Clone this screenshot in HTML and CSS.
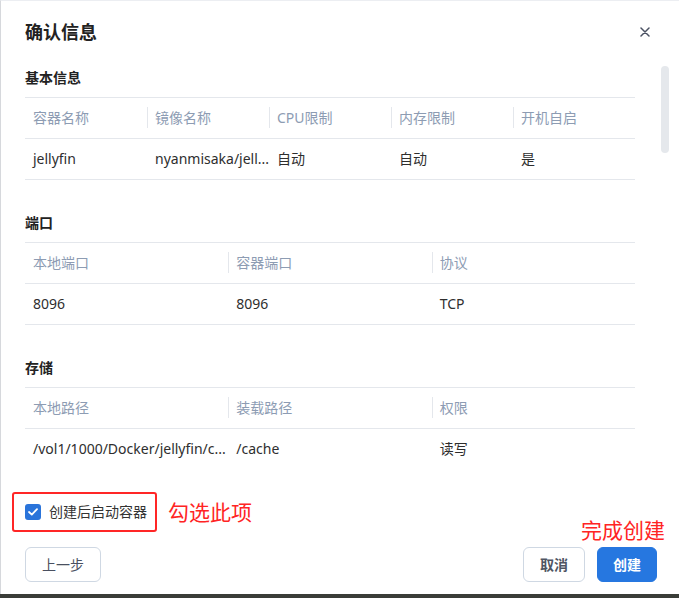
FILE: index.html
```html
<!DOCTYPE html>
<html lang="zh-CN">
<head>
  <meta charset="UTF-8" />
  <title>确认信息</title>
  <link rel="stylesheet" href="styles.css">
</head>
<body>
  <div class="dialog">
    <div class="dialog-head">
      <h1>确认信息</h1>
      <span class="close">
        <svg width="10" height="10" viewBox="0 0 10 10">
          <path d="M1 1 L9 9 M9 1 L1 9" stroke="#4b5263" stroke-width="1.5" stroke-linecap="round" />
        </svg>
      </span>
    </div>

    <div class="dialog-body">
      <div class="scroll-thumb"></div>

      <div class="section">
        <h2>基本信息</h2>
        <table>
          <thead>
            <tr><th>容器名称</th><th>镜像名称</th><th>CPU限制</th><th>内存限制</th><th>开机自启</th></tr>
          </thead>
          <tbody>
            <tr><td>jellyfin</td><td>nyanmisaka/jell...</td><td>自动</td><td>自动</td><td>是</td></tr>
          </tbody>
        </table>
      </div>

      <div class="section">
        <h2>端口</h2>
        <table>
          <thead>
            <tr><th>本地端口</th><th>容器端口</th><th>协议</th></tr>
          </thead>
          <tbody>
            <tr><td>8096</td><td>8096</td><td>TCP</td></tr>
          </tbody>
        </table>
      </div>

      <div class="section">
        <h2>存储</h2>
        <table>
          <thead>
            <tr><th>本地路径</th><th>装载路径</th><th>权限</th></tr>
          </thead>
          <tbody>
            <tr><td>/vol1/1000/Docker/jellyfin/c...</td><td>/cache</td><td>读写</td></tr>
          </tbody>
        </table>
      </div>
    </div>

    <div class="dialog-foot">
      <div class="check-row">
        <label class="mark">
          <span class="checkbox">
            <svg width="10" height="8" viewBox="0 0 10 8">
              <path d="M1 4 L3.8 6.6 L9 1.2" fill="none" stroke="#fff" stroke-width="1.8" stroke-linecap="round" stroke-linejoin="round" />
            </svg>
          </span>
          <span>创建后启动容器</span>
        </label>
        <span class="note">勾选此项</span>
      </div>

      <div class="actions">
        <button class="btn btn-back">上一步</button>
        <div class="actions-right">
          <button class="btn btn-cancel">取消</button>
          <button class="btn btn-primary">创建</button>
        </div>
        <span class="note note-done">完成创建</span>
      </div>
    </div>
  </div>
</body>
</html>
```

FILE: styles.css
```css
* {
  box-sizing: border-box;
}

body {
  margin: 0;
  background-color: #3a3d38;
  font-family: "Noto Sans", "Noto Sans CJK SC", sans-serif;
  color: #333;
}

.dialog {
  height: 594px;
  background-color: #ffffff;
  border-top: 1px solid #eceef2;
  border-left: 1px solid #d6d8dc;
  display: flex;
  flex-direction: column;
}

.dialog-head {
  display: flex;
  justify-content: space-between;
  align-items: center;
  padding: 19px 29px 0 24px;
}

.dialog-head h1 {
  margin: 0;
  font-size: 18px;
  line-height: 24px;
  font-weight: bold;
  color: #222;
}

.close {
  display: flex;
  cursor: pointer;
}

.dialog-body {
  position: relative;
  height: 425px;
  padding: 24px 44px 0 24px;
  overflow: hidden;
}

.scroll-thumb {
  position: absolute;
  top: 22px;
  right: 10px;
  width: 8px;
  height: 87px;
  border-radius: 4px;
  background-color: #e5e8ec;
}

.section + .section {
  margin-top: 33px;
}

.section h2 {
  margin: 0 0 9px;
  font-size: 14px;
  line-height: 20px;
  font-weight: bold;
  color: #222;
}

table {
  width: 100%;
  border-collapse: collapse;
  table-layout: fixed;
  border-top: 1px solid #e4e7ec;
  font-size: 14px;
}

th, td {
  height: 41px;
  padding: 0 8px;
  text-align: left;
  font-weight: normal;
  line-height: 20px;
  border-bottom: 1px solid #e4e7ec;
  white-space: nowrap;
}

th {
  position: relative;
  color: #8d9cb3;
}

th + th::before {
  content: "";
  position: absolute;
  left: 0;
  top: 9px;
  height: 21px;
  border-left: 1px solid #e4e7ec;
}

td {
  color: #2e2e2e;
}

.dialog-foot {
  padding: 23px 22px 0 11px;
}

.check-row {
  display: flex;
  align-items: center;
}

.mark {
  display: flex;
  align-items: center;
  gap: 8px;
  padding: 8px 8px 8px 11px;
  border: 2px solid #ff2626;
  border-radius: 3px;
  font-size: 14px;
  line-height: 20px;
  color: #333;
}

.checkbox {
  width: 16px;
  height: 16px;
  border-radius: 3px;
  background-color: #2a74da;
  display: flex;
  justify-content: center;
  align-items: center;
}

.note {
  color: #ff2424;
  font-size: 21px;
  line-height: 24px;
}

.check-row .note {
  margin-left: 11px;
}

.actions {
  position: relative;
  display: flex;
  justify-content: space-between;
  margin-top: 15px;
  padding-left: 13px;
}

.actions-right {
  display: flex;
  gap: 12px;
}

.note-done {
  position: absolute;
  right: -8px;
  top: -29px;
}

.btn {
  height: 35px;
  padding: 0;
  border: 1px solid #cfd8e3;
  border-radius: 6px;
  background-color: #fff;
  font-family: inherit;
  font-size: 14px;
  line-height: 20px;
  color: #4a5060;
  cursor: pointer;
}

.btn-back {
  width: 76px;
}

.btn-cancel {
  width: 62px;
  font-weight: bold;
  color: #4f5563;
}

.btn-primary {
  width: 60px;
  border-color: #2677e0;
  background-color: #2677e0;
  color: #fff;
  font-weight: bold;
}
```
